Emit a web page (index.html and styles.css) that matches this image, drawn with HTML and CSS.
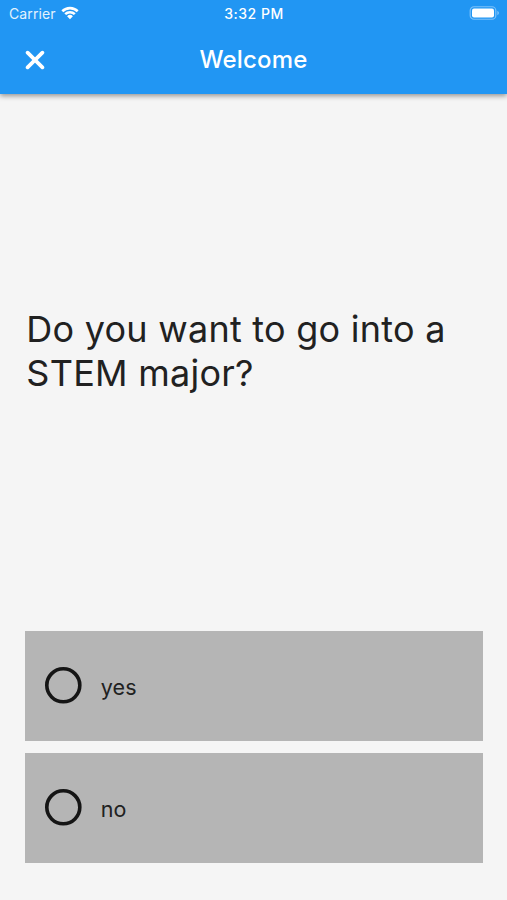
FILE: index.html
```html
<!DOCTYPE html>
<html lang="en">
<head>
<meta charset="utf-8">
<title>Welcome</title>
<link rel="stylesheet" href="styles.css">
</head>
<body>
<header class="top">
  <div class="status">
    <div class="carrier"><span>Carrier</span>
      <svg class="wifi" viewBox="0 0 18 14"><path d="M0.4 4.3A12.2 12.2 0 0 1 17.6 4.3L15.8 6.2A9.6 9.6 0 0 0 2.2 6.2ZM3.3 7.3A8.1 8.1 0 0 1 14.7 7.3L12.9 9.1A5.6 5.6 0 0 0 5.1 9.1ZM6.1 10.2A4.1 4.1 0 0 1 11.9 10.2L9 13.2Z"/></svg>
    </div>
    <time class="time">3:32 PM</time>
    <svg class="battery" viewBox="0 0 31 14"><rect class="shell" x="1.2" y=".75" width="25.6" height="12.5" rx="3.8"/><rect x="3" y="2.5" width="22" height="9" rx="2"/><path class="tip" d="M28.3 4.7Q30 5.4 30 7T28.3 9.3Z"/></svg>
  </div>
  <div class="bar">
    <svg class="close" viewBox="0 0 20 20"><path d="M2.6 2.6L17.4 17.4M17.4 2.6L2.6 17.4"/></svg>
    <h1 class="title">Welcome</h1>
    <span></span>
  </div>
</header>
<main class="page">
  <section class="prompt"><h2 class="question">Do you want to go into a<br>STEM major?</h2></section>
  <div class="options">
    <div class="option"><svg class="radio" viewBox="0 0 37 37"><circle cx="18.3" cy="18.3" r="16.5"/></svg><span class="label">yes</span></div>
    <div class="option"><svg class="radio" viewBox="0 0 37 37"><circle cx="18.3" cy="18.3" r="16.5"/></svg><span class="label">no</span></div>
  </div>
</main>
</body>
</html>
```
FILE: styles.css
```css
* { box-sizing: border-box; }
body { margin: 0; height: 900px; display: flex; flex-direction: column; background: #f5f5f5; color: #212121; font-family: Inter, "Liberation Sans", sans-serif; overflow: hidden; }
.top { height: 94px; flex: none; background: #2196f3; color: #fff; box-shadow: 0 2px 5px rgba(0,0,0,.4); }
.status { height: 27px; padding: 0 7px 0 9px; display: grid; grid-template-columns: 1fr auto 1fr; align-items: center; font-size: 14px; }
.carrier { display: flex; align-items: center; gap: 5.5px; color: #e3f2fd; letter-spacing: .1px; }
.wifi { width: 18px; height: 14px; fill: #fff; margin-bottom: 2px; }
.time { font-weight: 500; letter-spacing: .5px; margin-right: 1px; }
.battery { width: 31px; height: 14px; justify-self: end; fill: #fff; margin-bottom: 1px; }
.shell { fill: none; stroke: #7cc1f9; stroke-width: 1.2; }
.tip { fill: #7cc1f9; }
.bar { height: 66px; padding: 0 25px; display: grid; grid-template-columns: 1fr auto 1fr; align-items: center; }
.close { width: 20px; height: 20px; stroke: #fff; stroke-width: 3.7; stroke-linecap: round; }
.title { margin: 0; font-size: 24px; font-weight: 500; line-height: 30px; letter-spacing: .2px; }
.page { flex: 1; display: flex; flex-direction: column; padding: 0 24.5px 37px 25.3px; }
.prompt { flex: 1; display: flex; align-items: center; padding: 0 1px 24px; }
.question { margin: 0; font-size: 36px; font-weight: 400; line-height: 44px; letter-spacing: .25px; white-space: nowrap; }
.options { display: flex; flex-direction: column; gap: 12px; }
.option { height: 110px; display: flex; align-items: center; gap: 19px; padding-left: 19.5px; background: #b5b5b5; }
.radio { width: 37px; height: 37px; fill: none; stroke: #151515; stroke-width: 3.6; margin-bottom: 1px; }
.label { font-size: 21.5px; letter-spacing: .1px; padding-top: 1px; }
```
